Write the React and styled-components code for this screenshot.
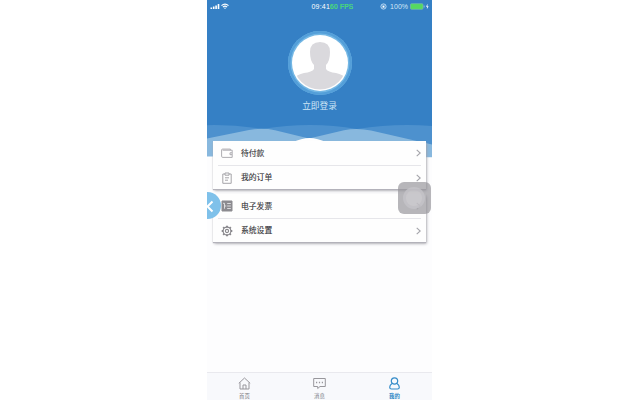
import React from "react";
import styled, { createGlobalStyle } from "styled-components";

const Global = createGlobalStyle`
  * { box-sizing: border-box; }
  body { margin: 0; background: #fff; font-family: "Liberation Sans", "Noto Sans CJK SC", sans-serif; }
`;
const Page = styled.main`
  width: 640px; height: 400px; display: flex; justify-content: center;
  padding-right: 1px; overflow: hidden; background: #fff;
`;
const Phone = styled.section`
  width: 225px; height: 400px; display: flex; flex-direction: column;
  position: relative; overflow: hidden; background: #fdfdfe;
`;
const Hero = styled.header`
  height: 158px; flex: none; background: #3580c5; display: flex;
  flex-direction: column; align-items: center; position: relative;
`;
const StatusBar = styled.div`
  width: 100%; height: 12px; padding: 0 3px; display: grid;
  grid-template-columns: 101.5px 1fr auto; align-items: center;
  color: #d3e8f8; font-size: 7px; line-height: 13px; white-space: nowrap;
`;
const StatusGroup = styled.div`
  display: flex; align-items: center; gap: ${(p) => p.$gap || 0}px;
`;
const Clock = styled.span`letter-spacing: .2px; color: #fff;`;
const Fps = styled.span`color: #4ee070; letter-spacing: .3px; font-size: 6.5px; -webkit-text-stroke: .2px #4ee070;`;
const Percent = styled.span`margin: 0 0 0 1px;`;
const Avatar = styled.div`
  width: 64px; height: 64px; margin-top: 19px; padding: 4px;
  border-radius: 50%; background: #74b7e4; box-shadow: inset 0 0 0 2.5px #549fd9;
`;
const Login = styled.div`
  margin-top: 4px; font-size: 8.7px; line-height: 14px; color: #d0e6f6;
`;
const Waves = styled.svg`
  position: absolute; left: 0; bottom: 0; width: 225px; height: 38px;
`;
const Menu = styled.nav`
  position: relative; width: 213.5px; height: 48px; margin: ${(p) => p.$top}px 0 0 5.5px;
  background: #fefefe; box-shadow: 0 1px 1px #b3b2ba, .5px 1.5px 3px #9d9ca5; flex: none;
`;
const MenuRow = styled.div`
  height: ${(p) => (p.$divided ? 25 : 23)}px; margin: 0 5px; padding: 0 0 0 3px; display: flex;
  align-items: center; color: #343438; font-size: 7.8px; line-height: 12px;
  border-bottom: ${(p) => (p.$divided ? "1px solid #e6e6ea" : "0")};
`;
const RowLabel = styled.span`
  margin-left: 8.5px; padding-top: 1px; flex: 1; font-weight: 400;
  -webkit-text-stroke: .12px currentColor;
`;
const Icon = styled.svg`
  width: ${(p) => p.$size || 12}px; height: ${(p) => p.$size || 12}px;
  display: block; fill: none; stroke: currentColor; stroke-width: ${(p) => p.$stroke || 1};
  color: ${(p) => p.$color || "#a5a4a9"}; flex: none;
`;
const Arrow = styled.svg`width: 5px; height: 8px; fill: none; stroke: #a4a4aa; stroke-width: 1.1;`;
const BackBubble = styled.div`
  position: absolute; top: 192px; left: -13px; width: 27px; height: 27px;
  border-radius: 50%; background: #7fc1ea; padding: 7px 0 0 12px;
`;
const AssistiveTouch = styled.div`
  position: absolute; top: 181.5px; left: 191px; width: 32.5px; height: 32.5px;
  border-radius: 6px; background: rgba(149,147,153,.68); display: grid; place-items: center;
`;
const TouchRing = styled.div`
  width: 22px; height: 22px; border-radius: 50%; border: 3px solid rgba(190,189,193,.6);
  background: rgba(216,215,219,.55);
`;
const TabBar = styled.nav`
  height: 28px; margin-top: auto; border-top: 1px solid #e9e9ee;
  background: #f8f9fc; display: grid; grid-template-columns: repeat(3, 1fr);
`;
const Tab = styled.div`
  display: flex; flex-direction: column; align-items: center; padding-top: 4px;
  color: ${(p) => (p.$active ? "#2985c4" : "#77777c")};
  font-size: 5.4px; line-height: 7px; font-weight: ${(p) => (p.$active ? 700 : 400)}; gap: 2.5px;
`;

function WalletIcon() {
  return <Icon viewBox="0 0 12 12" $stroke={0.9}><path d="M1.6 3.2h9.6v7.2H1.8Q.6 10.4.6 9.3V3q0-.9 1-.9h7.8v1.1M11 5.8H9v1.9h2"/></Icon>;
}
function ClipboardIcon() {
  return <Icon viewBox="0 0 12 12"><path d="M4 2H1.8v9.3h8.4V2H8M4 1h4v2.2H4zM4 5.8h4M4 8.2h3"/></Icon>;
}
function InvoiceIcon() {
  return <Icon viewBox="0 0 12 12" $color="#8c8b90"><path d="M1 1h10v10H1z" fill="currentColor"/><path d="M2 3.3h1.5v5.4M3.5 6h1.8M6.2 3.5h3.6M6.2 6h3.6M6.2 8.5h3.6" stroke="#f1f1f3" strokeWidth=".8"/></Icon>;
}
function GearIcon() {
  return <Icon viewBox="0 0 12 12" $color="#88878c" $stroke={1.1}><circle cx="6" cy="6" r="3.9"/><circle cx="6" cy="6" r="1.6"/><path d="M6 .7v1.5M6 9.8v1.5M.7 6h1.5M9.8 6h1.5M2.2 2.2l1.1 1.1M8.7 8.7l1.1 1.1M9.8 2.2L8.7 3.3M2.2 9.8l1.1-1.1" strokeWidth="1.9"/></Icon>;
}
function MenuItem({ icon, label, divided }) {
  return <MenuRow $divided={divided}>{icon}<RowLabel>{label}</RowLabel><Arrow viewBox="0 0 5 8"><path d="M.7 .8L4.2 4 .7 7.2"/></Arrow></MenuRow>;
}

export default function App() {
  return <><Global/><Page><Phone>
    <Hero>
      <StatusBar>
        <StatusGroup $gap={1}>
          <svg width="10" height="7" viewBox="0 0 10 7" fill="#fff"><path d="M.5 4.5h1.6V6H.5zM2.9 3.6h1.6V6H2.9zM5.3 2.4h1.6V6H5.3zM7.7 1h1.6v5H7.7z"/></svg>
          <svg width="8" height="7" viewBox="0 0 8 7" fill="none" stroke="#fff" strokeWidth="1.1"><path d="M.5 2.7Q4-.5 7.5 2.7M1.9 4.1Q4 2.2 6.1 4.1"/><path d="M3 4.9Q4 4.2 5 4.9L4 6z" fill="#fff" stroke="none"/></svg>
        </StatusGroup>
        <StatusGroup><Clock>09:41</Clock><Fps>60 FPS</Fps></StatusGroup>
        <StatusGroup $gap={2}>
          <svg width="7" height="7" viewBox="0 0 7 7" fill="none" stroke="#dceeff"><circle cx="3.5" cy="3.5" r="2.6" strokeWidth=".8"/><rect x="2.5" y="3" width="2" height="1.7" fill="#fff" stroke="none"/><path d="M2.8 3V2.3h1.4V3" strokeWidth=".5"/></svg>
          <Percent>100%</Percent>
          <svg width="19" height="7" viewBox="0 0 19 7"><rect x=".5" y=".7" width="12.5" height="5.6" rx="1" fill="#55d960" stroke="#7fbfb0" strokeWidth=".6"/><path d="M13.7 2.5v2h.8v-2z" fill="#9bc9e8"/><path d="M17.6.7L16 3.8h1.2L16.8 6.3l1.8-3.1h-1.2z" fill="#fff"/></svg>
        </StatusGroup>
      </StatusBar>
      <Avatar>
        <svg width="56" height="56" viewBox="0 0 56 56"><defs><clipPath id="portrait"><circle cx="28" cy="28" r="26.5"/></clipPath></defs><circle cx="28" cy="28" r="28" fill="#fff"/><path clipPath="url(#portrait)" d="M18 17Q18 7 28 7t10 10q0 9-4 13v4q2 3 10 4 8 2 12 7v11H0V45q4-5 12-7 8-1 10-4v-4q-4-4-4-13z" fill="#dad9dd"/></svg>
      </Avatar>
      <Login>立即登录</Login>
      <Waves viewBox="0 0 225 38">
        <path d="M0 5.2Q28 4.5 55 9Q80 5 103 5Q127 5 150 9Q188 3 225 6V38H0z" fill="#4d91ce"/>
        <path d="M0 18.5L42 10Q55 7.500 68 10.200L102 18.500L137 10.200Q150 7.500 164 10.500L225 24.500V38H0z" fill="#88b8de"/>
        <path d="M84 23Q95 18 102.5 18Q110 18 121 23zM0 36.5H10V38H0zM215 37.3H225V38H215z" fill="#fff"/>
      </Waves>
    </Hero>
    <Menu $top={-17}><MenuItem icon={<WalletIcon/>} label="待付款" divided/><MenuItem icon={<ClipboardIcon/>} label="我的订单"/></Menu>
    <Menu $top={5}><MenuItem icon={<InvoiceIcon/>} label="电子发票" divided/><MenuItem icon={<GearIcon/>} label="系统设置"/></Menu>
    <BackBubble><svg width="8" height="13" viewBox="0 0 8 13" fill="none" stroke="#fff" strokeWidth="2"><path d="M6.5 1.5l-5 5 5 5"/></svg></BackBubble>
    <AssistiveTouch><TouchRing/></AssistiveTouch>
    <TabBar>
      <Tab><Icon viewBox="0 0 13 13" $size={13} $color="#98979c"><path d="M.8 6.3L6.5 1l5.7 5.3M2 5.5V12h9V5.5M5 12V8h3v4"/></Icon>首页</Tab>
      <Tab><Icon viewBox="0 0 13 13" $size={13} $color="#98979c"><path d="M.7 1.5h11.6v8H7L4.7 11.5v-2h-4z"/><path d="M3 5.5h1.2M5.9 5.5h1.2M8.8 5.5H10" strokeWidth="1.3"/></Icon>消息</Tab>
      <Tab $active><Icon viewBox="0 0 13 13" $size={13} $color="#348bc8" $stroke={1.2}><circle cx="6.5" cy="4" r="3.2"/><path d="M4 6.5Q1.7 8 1.7 10.2q0 1.8 1.8 1.8h6q1.8 0 1.8-1.8Q11.3 8 9 6.5"/></Icon>我的</Tab>
    </TabBar>
  </Phone></Page></>;
}
